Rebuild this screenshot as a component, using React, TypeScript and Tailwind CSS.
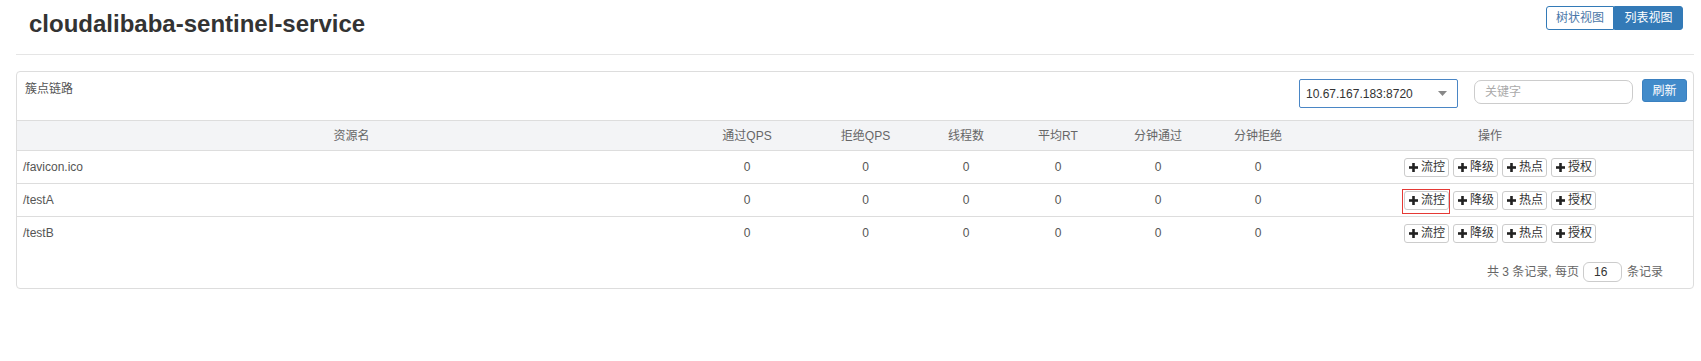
import React from "react";

const cols = "grid grid-cols-[669px_122px_115px_86px_98px_102px_98px_1fr]";

function Plus() {
  return (
    <svg width="9" height="9" viewBox="0 0 9 9" className="shrink-0">
      <rect x="3.2" y="0" width="2.6" height="9" fill="#222" />
      <rect x="0" y="3.2" width="9" height="2.6" fill="#222" />
    </svg>
  );
}

function ActBtn({ label, hl }: { label: string; hl?: boolean }) {
  return (
    <div className="relative">
      <div className="flex h-[19px] w-[45px] items-center gap-[3px] rounded-[3px] border border-[#ccc] bg-white pl-[4px] text-[12px] leading-none text-[#333]">
        <Plus />
        <span>{label}</span>
      </div>
      {hl && (
        <div className="absolute left-[-2px] top-[-2px] h-[25px] w-[48px] border border-[#e53935]" />
      )}
    </div>
  );
}

const rows = ["/favicon.ico", "/testA", "/testB"];
const heads = ["通过QPS", "拒绝QPS", "线程数", "平均RT", "分钟通过", "分钟拒绝"];

export default function App() {
  return (
    <div
      className="w-[1701px] bg-white pl-[16px] pr-[7px] text-[12px] text-[#666]"
      style={{ fontFamily: '"Liberation Sans", Arial, "Noto Sans CJK SC", sans-serif' }}
    >
      <div className="flex h-[55px] items-start justify-between border-b border-[#e5e5e5]">
        <h1 className="ml-[13px] mt-[12px] text-[24px] font-bold leading-[24px] text-[#333]">
          cloudalibaba-sentinel-service
        </h1>
        <div className="mr-[11px] mt-[6px] flex text-[12px] leading-none">
          <div className="flex h-[24px] w-[68px] items-center justify-center rounded-l-[3px] border border-[#337ab7] bg-white text-[#4a77a8]">
            树状视图
          </div>
          <div className="flex h-[24px] w-[69px] items-center justify-center rounded-r-[3px] border border-[#337ab7] bg-[#337ab7] text-white">
            列表视图
          </div>
        </div>
      </div>

      <div className="mt-[16px] rounded-[4px] border border-[#ddd]">
        <div className="flex h-[48px] items-start justify-between">
          <div className="pl-[8px] pt-[8px] leading-[18px] text-[#555]">簇点链路</div>
          <div className="flex items-start pr-[6px]">
            <div className="mt-[7px] flex h-[29px] w-[159px] items-center justify-between rounded-[2px] border border-[#4a86c5] pl-[6px] pr-[10px] text-[#333]">
              <span>10.67.167.183:8720</span>
              <svg width="9" height="5" viewBox="0 0 9 5">
                <path d="M0 0 L9 0 L4.5 5 Z" fill="#888" />
              </svg>
            </div>
            <div className="ml-[16px] mt-[8px] flex h-[24px] w-[159px] items-center rounded-[7px] border border-[#ccc] pl-[10px] text-[#aaa]">
              关键字
            </div>
            <div className="ml-[9px] mt-[7px] flex h-[23px] w-[45px] items-center justify-center rounded-[3px] border border-[#3a80c0] bg-[#428bca] text-white">
              刷新
            </div>
          </div>
        </div>

        <div className={`${cols} h-[30px] items-center border-t border-[#ddd] bg-[#f3f4f6] text-center text-[#666]`}>
          <div>资源名</div>
          {heads.map((h) => (
            <div key={h}>{h}</div>
          ))}
          <div className="pr-[20px]">操作</div>
        </div>

        {rows.map((r, i) => (
          <div key={r} className={`${cols} h-[33px] items-center border-t border-[#ddd] text-[#555]`}>
            <div className="pl-[6px]">{r}</div>
            {heads.map((h) => (
              <div key={h} className="text-center">0</div>
            ))}
            <div className="flex justify-center gap-[4px]">
              <ActBtn label="流控" hl={i === 1} />
              <ActBtn label="降级" />
              <ActBtn label="热点" />
              <ActBtn label="授权" />
            </div>
          </div>
        ))}

        <div className="flex h-[39px] items-start justify-end pr-[30px] pt-[13px] text-[#666]">
          <span className="mt-[3px] leading-[14px]">共 3 条记录, 每页</span>
          <div className="ml-[4px] flex h-[20px] w-[39px] items-center rounded-[6px] border border-[#ccc] pl-[10px] text-[#333]">
            16
          </div>
          <span className="ml-[5px] mt-[3px] leading-[14px]">条记录</span>
        </div>
      </div>
      <div className="h-[72px]" />
    </div>
  );
}
